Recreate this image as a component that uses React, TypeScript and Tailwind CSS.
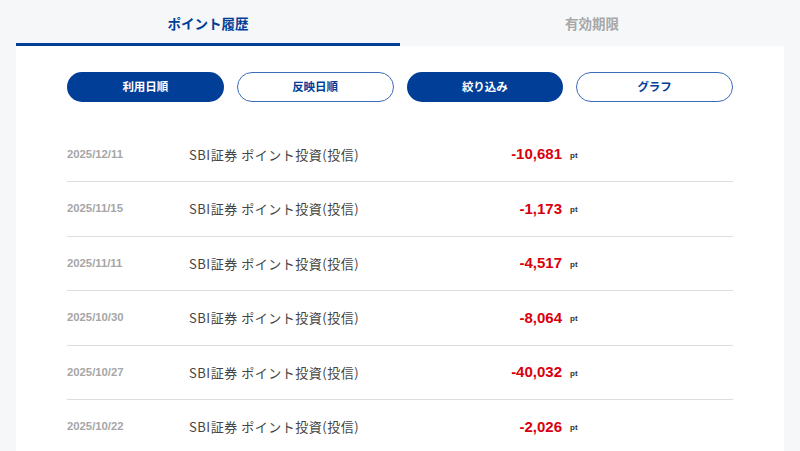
const rows = [
  { date: "2025/12/11", amount: "-10,681" },
  { date: "2025/11/15", amount: "-1,173" },
  { date: "2025/11/11", amount: "-4,517" },
  { date: "2025/10/30", amount: "-8,064" },
  { date: "2025/10/27", amount: "-40,032" },
  { date: "2025/10/22", amount: "-2,026" },
];

const jp = "font-['Noto_Sans_CJK_JP','Noto_Sans',sans-serif]";
const num = "font-['Liberation_Sans','Noto_Sans_CJK_JP',sans-serif]";

function Pill({ label, filled }: { label: string; filled?: boolean }) {
  return (
    <button
      className={
        filled
          ? `flex h-[30px] items-center justify-center rounded-full bg-[#003e98] text-[11.5px] font-bold text-white ${jp}`
          : `flex h-[30px] items-center justify-center rounded-full border border-[#3d6bbb] bg-white text-[11.5px] font-bold text-[#003e98] ${jp}`
      }
    >
      {label}
    </button>
  );
}

export default function App() {
  return (
    <div className="min-h-[451px] w-full bg-[#f6f7f9] px-4">
      <div className="flex h-[46px]">
        <div className={`flex flex-1 items-center justify-center border-b-[3px] border-[#003e98] pt-[3px] text-[13.5px] font-bold text-[#003e98] ${jp}`}>
          ポイント履歴
        </div>
        <div className={`flex flex-1 items-center justify-center text-[13.5px] font-bold text-[#a8a8a8] ${jp}`}>
          有効期限
        </div>
      </div>
      <div className="bg-white px-[51px] pt-[26px] pb-4">
        <div className="grid grid-cols-4 gap-[13px]">
          <Pill label="利用日順" filled />
          <Pill label="反映日順" />
          <Pill label="絞り込み" filled />
          <Pill label="グラフ" />
        </div>
        <div className="mt-[25.5px]">
          {rows.map((r) => (
            <div key={r.date} className="flex h-[54.5px] items-center border-b border-[#dddddd]">
              <div className={`w-[122px] text-[11.3px] font-bold text-[#a6a6a6] ${num}`}>{r.date}</div>
              <div className={`w-[253px] text-[13px] tracking-[0.04em] text-[#444444] ${jp}`}>
                SBI証券 ポイント投資(投信)
              </div>
              <div className={`w-[120px] text-right text-[15px] font-bold text-[#d9000d] ${num}`}>{r.amount}</div>
              <div className={`ml-[8px] pt-[3px] text-[8px] font-bold text-[#333333] ${num}`}>pt</div>
            </div>
          ))}
        </div>
      </div>
    </div>
  );
}
